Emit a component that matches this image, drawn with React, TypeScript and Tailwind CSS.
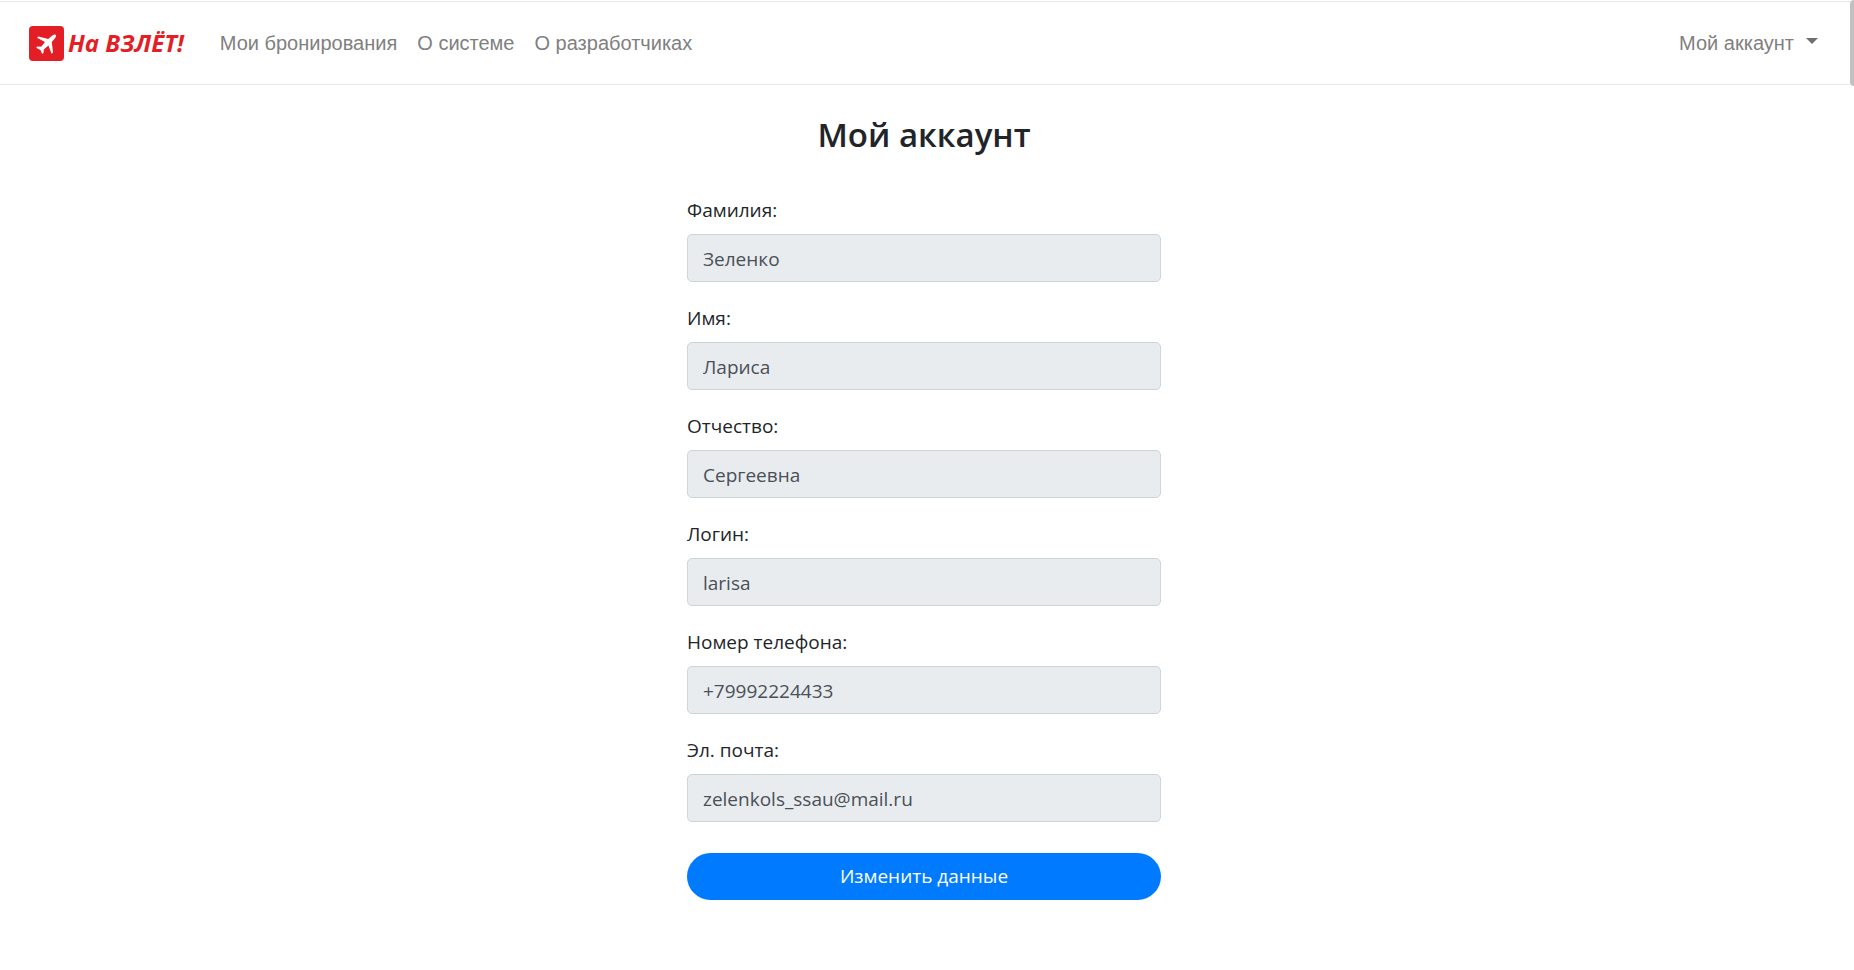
const navLinks = ["Мои бронирования", "О системе", "О разработчиках"];

const fields = [
  { id: "surname", label: "Фамилия:", value: "Зеленко", type: "text" },
  { id: "name", label: "Имя:", value: "Лариса", type: "text" },
  { id: "patronymic", label: "Отчество:", value: "Сергеевна", type: "text" },
  { id: "login", label: "Логин:", value: "larisa", type: "text" },
  { id: "phone", label: "Номер телефона:", value: "+79992224433", type: "tel" },
  { id: "email", label: "Эл. почта:", value: "zelenkols_ssau@mail.ru", type: "email" },
];

function Logo() {
  return (
    <a href="#" className="flex items-center gap-1 text-[#e31e24]">
      <svg viewBox="0 0 35 35" className="size-[35px]" aria-hidden="true">
        <rect width="35" height="35" rx="4" fill="#e31e24" />
        <path
          d="M26.6 8.8C25.4 8 24 9 22.8 10L19.2 13L9.4 10.6L8 11.8L16 16L12.2 20.8L8.4 20.6L7.2 21.8L11.4 23.9L13.2 28L14.6 26.8L14.8 23.4L19.4 19.4L22.6 27.8L24 26.4L22.8 16L25.8 12.6C26.8 11.4 27.6 9.8 26.6 8.8Z"
          fill="#fff"
        />
      </svg>
      <span className="font-['Open_Sans'] text-2xl font-bold italic whitespace-nowrap">На ВЗЛЁТ!</span>
    </a>
  );
}

export default function App() {
  return (
    <div className="flex min-h-screen flex-col bg-white pt-px font-['Open_Sans','Noto_Sans',sans-serif] text-[#212529]">
      <div className="absolute top-0 right-0 h-[86px] w-1 rounded-l-sm bg-[#c1c1c1]" />
      <header className="mr-1 flex h-[84px] items-center border-y border-[#e7eaed] pr-8 pl-[29px] font-['Liberation_Sans',Arial,sans-serif] text-xl text-[#808080]">
        <Logo />
        <nav className="ml-9 flex flex-1 gap-5">
          {navLinks.map((text) => (
            <a key={text} href="#" className="whitespace-nowrap">
              {text}
            </a>
          ))}
        </nav>
        <button type="button" className="flex items-center gap-3">
          Мой аккаунт
          <svg viewBox="0 0 12 6" className="mb-1 h-1.5 w-3" fill="#707070" aria-hidden="true">
            <path d="M0 0H12L6 6Z" />
          </svg>
        </button>
      </header>
      <main className="flex justify-center pt-7 pr-1.5">
        <div className="w-full max-w-[474px]">
          <h1 className="text-center text-[33px] leading-[44px] font-semibold">Мой аккаунт</h1>
          <form className="mt-[37px] flex flex-col">
            {fields.map((f) => (
              <div key={f.id} className="mb-5 flex flex-col gap-2">
                <label htmlFor={f.id} className="text-[19px] leading-8">
                  {f.label}
                </label>
                <input
                  id={f.id}
                  type={f.type}
                  defaultValue={f.value}
                  readOnly
                  className="h-12 rounded-[5px] border border-[#ced4da] bg-[#e9ecef] px-[15px] pt-0.5 text-[19px] text-[#495057]"
                />
              </div>
            ))}
            <button type="button" className="mt-[11px] h-[47px] rounded-full bg-[#007bff] text-[19px] font-medium text-white">
              Изменить данные
            </button>
          </form>
        </div>
      </main>
    </div>
  );
}
